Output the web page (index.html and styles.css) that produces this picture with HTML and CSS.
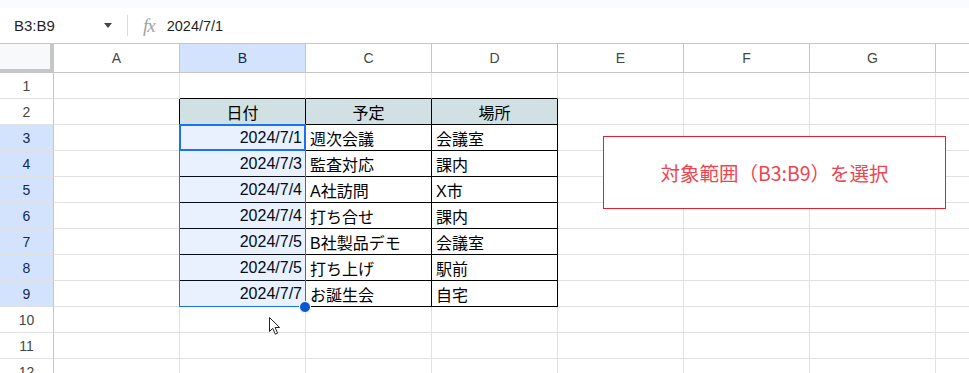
FILE: index.html
```html
<!DOCTYPE html>
<html lang="ja">
<head>
  <meta charset="UTF-8">
  <title>予定表 - スプレッドシート</title>
  <link rel="stylesheet" href="styles.css">
</head>
<body>
  <div class="top-strip"></div>

  <div class="formula-bar">
    <div class="name-box">B3:B9</div>
    <span class="caret"></span>
    <span class="divider"></span>
    <span class="fx">fx</span>
    <span class="formula">2024/7/1</span>
  </div>

  <div class="sheet">
    <table class="grid">
      <colgroup>
        <col class="col-rh">
        <col span="8" class="col-cell">
      </colgroup>
      <thead>
        <tr>
          <th class="corner"></th>
          <th>A</th><th class="sel">B</th><th>C</th><th>D</th><th>E</th><th>F</th><th>G</th><th></th>
        </tr>
      </thead>
      <tbody>
        <tr><th>1</th><td></td><td class="above"></td><td class="above"></td><td class="above"></td><td></td><td></td><td></td><td></td></tr>
        <tr><th>2</th><td class="left-of"></td><td class="hd">日付</td><td class="hd">予定</td><td class="hd">場所</td><td></td><td></td><td></td><td></td></tr>
        <tr><th class="sel">3</th><td class="left-of"></td><td class="tb num">2024/7/1</td><td class="tb">週次会議</td><td class="tb">会議室</td><td></td><td></td><td></td><td></td></tr>
        <tr><th class="sel">4</th><td class="left-of"></td><td class="tb num">2024/7/3</td><td class="tb">監査対応</td><td class="tb">課内</td><td></td><td></td><td></td><td></td></tr>
        <tr><th class="sel">5</th><td class="left-of"></td><td class="tb num">2024/7/4</td><td class="tb">A社訪問</td><td class="tb">X市</td><td></td><td></td><td></td><td></td></tr>
        <tr><th class="sel">6</th><td class="left-of"></td><td class="tb num">2024/7/4</td><td class="tb">打ち合せ</td><td class="tb">課内</td><td></td><td></td><td></td><td></td></tr>
        <tr><th class="sel">7</th><td class="left-of"></td><td class="tb num">2024/7/5</td><td class="tb">B社製品デモ</td><td class="tb">会議室</td><td></td><td></td><td></td><td></td></tr>
        <tr><th class="sel">8</th><td class="left-of"></td><td class="tb num">2024/7/5</td><td class="tb">打ち上げ</td><td class="tb">駅前</td><td></td><td></td><td></td><td></td></tr>
        <tr><th class="sel">9</th><td class="left-of"></td><td class="tb num">2024/7/7</td><td class="tb">お誕生会</td><td class="tb">自宅</td><td></td><td></td><td></td><td></td></tr>
        <tr><th>10</th><td></td><td></td><td></td><td></td><td></td><td></td><td></td><td></td></tr>
        <tr><th>11</th><td></td><td></td><td></td><td></td><td></td><td></td><td></td><td></td></tr>
        <tr><th>12</th><td></td><td></td><td></td><td></td><td></td><td></td><td></td><td></td></tr>
      </tbody>
    </table>

    <!-- selection B3:B9 -->
    <div class="selection"></div>
    <div class="active-cell"></div>
    <span class="fill-handle"></span>

    <div class="callout">対象範囲（B3:B9）を選択</div>

    <svg class="cursor" width="14" height="20" viewBox="0 0 14 20">
      <path d="M1.5 1.5 L1.5 15.5 L4.8 12.4 L7.3 18.2 L9.6 17.2 L7.1 11.5 L11.6 11.5 Z" fill="#fff" stroke="#222" stroke-width="1" stroke-linejoin="round"/>
    </svg>
  </div>
</body>
</html>
```

FILE: styles.css
```css
body {
  margin: 0;
  width: 969px;
  height: 373px;
  overflow: hidden;
  background: #ffffff;
  font-family: 'Liberation Sans', 'Noto Sans CJK JP', sans-serif;
  color: #000;
}

.top-strip {
  height: 8px;
  background: #f9fbfd;
}

.formula-bar {
  height: 35px;
  display: flex;
  align-items: center;
  font-size: 14.5px;
  color: #1f1f1f;
}

.name-box {
  width: 86px;
  padding-left: 14px;
  font-size: 15px;
}

.caret {
  width: 0;
  height: 0;
  border-left: 4.5px solid transparent;
  border-right: 4.5px solid transparent;
  border-top: 5px solid #444746;
  margin-left: 4px;
}

.divider {
  width: 1px;
  height: 21px;
  background: #dadce0;
  margin-left: 15px;
}

.fx {
  font-family: 'Liberation Serif', serif;
  font-style: italic;
  font-size: 19px;
  color: #a3a3a3;
  margin-left: 15px;
  letter-spacing: -1px;
}

.formula {
  margin-left: 12px;
}

.sheet {
  position: relative;
  border-top: 1px solid #c4c7c5;
  overflow: hidden;
}

.grid {
  border-collapse: separate;
  border-spacing: 0;
  table-layout: fixed;
  width: 1062px;
}

.col-rh { width: 54px; }
.col-cell { width: 126px; }

.grid th,
.grid td {
  box-sizing: border-box;
  height: 26px;
  padding: 0 4px;
  border-right: 1px solid #e1e1e1;
  border-bottom: 1px solid #e1e1e1;
  white-space: nowrap;
  overflow: hidden;
  font-size: 16px;
  font-weight: normal;
  text-align: left;
}

.grid thead th {
  height: 29px;
  padding: 0;
  text-align: center;
  font-size: 14px;
  color: #444746;
  border-right-color: #c4c7c5;
  border-bottom-color: #c4c7c5;
}

.grid tbody th {
  padding: 0;
  text-align: center;
  font-size: 14px;
  color: #444746;
  border-right-color: #c4c7c5;
}

.grid thead th.corner {
  background: #f8f9fa;
  border-right: 4px solid #c4c7c5;
  border-bottom: 4px solid #c4c7c5;
}

.grid th.sel {
  background: #d3e3fd;
  color: #0e2a55;
}

/* black borders of the B2:D9 table */
.grid td.above { border-bottom-color: #000; }
.grid td.left-of { border-right-color: #000; }

.grid td.hd,
.grid td.tb {
  border-right-color: #000;
  border-bottom-color: #000;
}

.grid td.hd {
  background: #d0e0e3;
  text-align: center;
}

.grid td.num {
  text-align: right;
  padding-right: 3px;
}

.selection {
  position: absolute;
  left: 179px;
  top: 80px;
  width: 127px;
  height: 183px;
  box-sizing: border-box;
  border: 1px solid #1a73e8;
  background: rgba(26, 115, 232, 0.1);
}

.active-cell {
  position: absolute;
  left: 179px;
  top: 80px;
  width: 127px;
  height: 27px;
  box-sizing: border-box;
  border: 2px solid #1a73e8;
}

.fill-handle {
  position: absolute;
  left: 299px;
  top: 257px;
  width: 10px;
  height: 10px;
  border-radius: 50%;
  background: #0b57d0;
  border: 1px solid #ffffff;
}

.callout {
  position: absolute;
  left: 603px;
  top: 92px;
  width: 343px;
  height: 73px;
  box-sizing: border-box;
  border: 1px solid #e3202f;
  background: #ffffff;
  display: flex;
  align-items: center;
  justify-content: center;
  font-family: 'Noto Sans CJK JP', sans-serif;
  font-size: 19.5px;
  color: #ee4450;
}

.cursor {
  position: absolute;
  left: 268px;
  top: 272px;
}
```
